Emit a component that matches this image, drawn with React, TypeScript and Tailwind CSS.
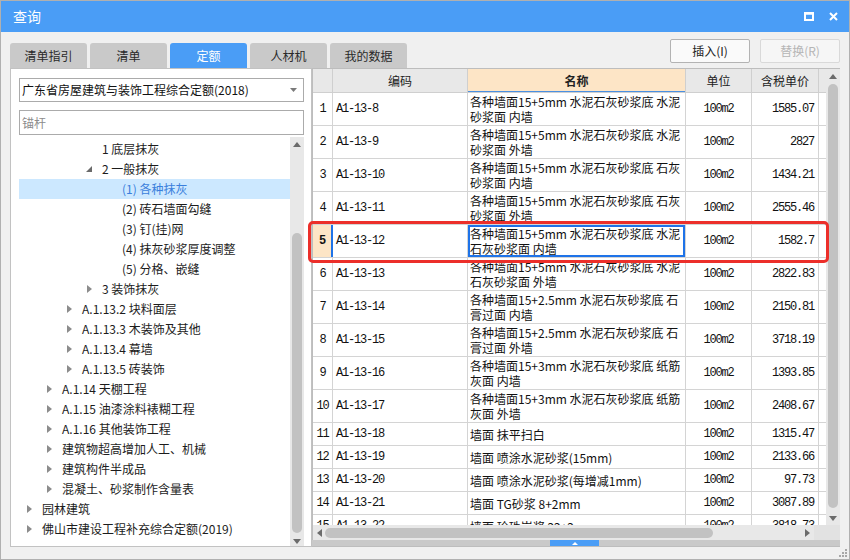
import React from 'react';

type TreeItem = { level: number; text: string; arrow: 'none' | 'open' | 'closed'; selected?: boolean };
type Row = { no: number; code: string; name: string[]; price: string };

const treeItems: TreeItem[] = [
  { level: 3, text: '1 底层抹灰', arrow: 'none' },
  { level: 3, text: '2 一般抹灰', arrow: 'open' },
  { level: 4, text: '(1) 各种抹灰', arrow: 'none', selected: true },
  { level: 4, text: '(2) 砖石墙面勾缝', arrow: 'none' },
  { level: 4, text: '(3) 钉(挂)网', arrow: 'none' },
  { level: 4, text: '(4) 抹灰砂浆厚度调整', arrow: 'none' },
  { level: 4, text: '(5) 分格、嵌缝', arrow: 'none' },
  { level: 3, text: '3 装饰抹灰', arrow: 'closed' },
  { level: 2, text: 'A.1.13.2 块料面层', arrow: 'closed' },
  { level: 2, text: 'A.1.13.3 木装饰及其他', arrow: 'closed' },
  { level: 2, text: 'A.1.13.4 幕墙', arrow: 'closed' },
  { level: 2, text: 'A.1.13.5 砖装饰', arrow: 'closed' },
  { level: 1, text: 'A.1.14 天棚工程', arrow: 'closed' },
  { level: 1, text: 'A.1.15 油漆涂料裱糊工程', arrow: 'closed' },
  { level: 1, text: 'A.1.16 其他装饰工程', arrow: 'closed' },
  { level: 1, text: '建筑物超高增加人工、机械', arrow: 'closed' },
  { level: 1, text: '建筑构件半成品', arrow: 'closed' },
  { level: 1, text: '混凝土、砂浆制作含量表', arrow: 'closed' },
  { level: 0, text: '园林建筑', arrow: 'closed' },
  { level: 0, text: '佛山市建设工程补充综合定额(2019)', arrow: 'closed' },
];

const indent = ['pl-[8px]', 'pl-[28px]', 'pl-[48px]', 'pl-[68px]', 'pl-[88px]'];

const rows: Row[] = [
  { no: 1, code: 'A1-13-8', name: ['各种墙面15+5mm 水泥石灰砂浆底 水泥', '砂浆面 内墙'], price: '1585.07' },
  { no: 2, code: 'A1-13-9', name: ['各种墙面15+5mm 水泥石灰砂浆底 水泥', '砂浆面 外墙'], price: '2827' },
  { no: 3, code: 'A1-13-10', name: ['各种墙面15+5mm 水泥石灰砂浆底 石灰', '砂浆面 内墙'], price: '1434.21' },
  { no: 4, code: 'A1-13-11', name: ['各种墙面15+5mm 水泥石灰砂浆底 石灰', '砂浆面 外墙'], price: '2555.46' },
  { no: 5, code: 'A1-13-12', name: ['各种墙面15+5mm 水泥石灰砂浆底 水泥', '石灰砂浆面 内墙'], price: '1582.7' },
  { no: 6, code: 'A1-13-13', name: ['各种墙面15+5mm 水泥石灰砂浆底 水泥', '石灰砂浆面 外墙'], price: '2822.83' },
  { no: 7, code: 'A1-13-14', name: ['各种墙面15+2.5mm 水泥石灰砂浆底 石', '膏过面 内墙'], price: '2150.81' },
  { no: 8, code: 'A1-13-15', name: ['各种墙面15+2.5mm 水泥石灰砂浆底 石', '膏过面 外墙'], price: '3718.19' },
  { no: 9, code: 'A1-13-16', name: ['各种墙面15+3mm 水泥石灰砂浆底 纸筋', '灰面 内墙'], price: '1393.85' },
  { no: 10, code: 'A1-13-17', name: ['各种墙面15+3mm 水泥石灰砂浆底 纸筋', '灰面 外墙'], price: '2408.67' },
  { no: 11, code: 'A1-13-18', name: ['墙面 抹平扫白'], price: '1315.47' },
  { no: 12, code: 'A1-13-19', name: ['墙面 喷涂水泥砂浆(15mm)'], price: '2133.66' },
  { no: 13, code: 'A1-13-20', name: ['墙面 喷涂水泥砂浆(每增减1mm)'], price: '97.73' },
  { no: 14, code: 'A1-13-21', name: ['墙面 TG砂浆 8+2mm'], price: '3087.89' },
  { no: 15, code: 'A1-13-22', name: ['墙面 珍珠岩浆 22+2mm'], price: '3818.73' },
];

const cjk = "font-['Noto_Sans_CJK_SC',sans-serif]";
const mono = "font-['Liberation_Mono','Noto_Sans_CJK_SC',monospace] text-[12px] tracking-[-1.2px]";

const Arrow = ({ kind }: { kind: TreeItem['arrow'] }) => {
  if (kind === 'closed') {
    return (
      <svg width="5" height="8" viewBox="0 0 5 8">
        <path d="M0 0 L5 4 L0 8 Z" fill="#8c8c8c" />
      </svg>
    );
  }
  if (kind === 'open') {
    return (
      <svg width="6" height="6" viewBox="0 0 6 6" className="-ml-[1px]">
        <path d="M6 0 L6 6 L0 6 Z" fill="#6a6a6a" />
      </svg>
    );
  }
  return null;
};

const TriUp = () => (
  <svg width="8" height="5" viewBox="0 0 8 5">
    <path d="M0 5 L4 0 L8 5 Z" fill="#6b6b6b" />
  </svg>
);
const TriDown = () => (
  <svg width="8" height="5" viewBox="0 0 8 5">
    <path d="M0 0 L8 0 L4 5 Z" fill="#6b6b6b" />
  </svg>
);

const TreePanel = () => (
  <div className="w-[302px] h-full bg-white border border-[#c2c2c2] flex flex-col pl-[8px] pr-[6px] pt-[9px]">
    <div className="h-[24px] w-[285px] border border-[#ababab] flex items-center justify-between pl-[2px] pr-[6px]">
      <span className="text-[12px] text-[#111]">广东省房屋建筑与装饰工程综合定额(2018)</span>
      <svg width="7" height="4" viewBox="0 0 7 4">
        <path d="M0 0 L7 0 L3.5 4 Z" fill="#7a7a7a" />
      </svg>
    </div>
    <div className="mt-[8px] h-[25px] w-[285px] border border-[#ababab] flex items-center pl-[2px]">
      <span className="text-[12px] text-[#8c8c8c]">锚杆</span>
    </div>
    <div className="mt-[2px] flex-1 min-h-0 flex w-[285px]">
      <div className="w-[271px] pt-[2px] overflow-hidden">
        {treeItems.map((t, i) => (
          <div
            key={i}
            className={`h-[20px] flex items-center whitespace-nowrap ${indent[t.level]} ${t.selected ? 'bg-[#cce8ff] text-[#3a7fdc]' : 'text-[#1c1c1c]'}`}
          >
            <span className="w-[15px] flex items-center">
              <Arrow kind={t.arrow} />
            </span>
            <span className="text-[12px] leading-[20px]">{t.text}</span>
          </div>
        ))}
      </div>
      <div className="w-[14px] bg-[#e8e8e8] flex flex-col">
        <div className="h-[14px] flex items-center justify-center">
          <TriUp />
        </div>
        <div className="flex-1 pt-[82px] flex justify-center">
          <div className="w-[10px] h-[300px] rounded-full bg-[#c2c2c2]" />
        </div>
        <div className="h-[10px] flex items-center justify-center">
          <TriDown />
        </div>
      </div>
    </div>
  </div>
);

const TableArea = () => (
  <div className="w-[528px] h-full flex flex-col border-t border-b border-[#bdbdbd]">
    <div className="h-[456px] flex">
      <div className="w-[514px] h-full overflow-hidden bg-white border-l border-[#bdbdbd]">
        <div className={`h-[24px] flex bg-[#e8e8e8] border-b border-[#cfcfcf] text-[12px] text-[#222] ${cjk}`}>
          <div className="w-[20px] border-r border-[#cfcfcf]" />
          <div className="w-[135px] border-r border-[#cfcfcf] flex items-center justify-center">编码</div>
          <div className="w-[218px] border-r border-[#cfcfcf] flex items-center justify-center bg-[#fde5c6] font-bold shadow-[inset_0_-1px_0_#4a90e2]">名称</div>
          <div className="w-[66px] border-r border-[#cfcfcf] flex items-center justify-center">单位</div>
          <div className="w-[67px] border-r border-[#cfcfcf] flex items-center justify-center">含税单价</div>
          <div className="flex-1" />
        </div>
        {rows.map((r) => {
          const sel = r.no === 5;
          const two = r.name.length > 1;
          return (
            <div key={r.no} className={`${two ? 'h-[33px]' : 'h-[23px]'} flex border-b border-[#d4d4d4] text-[#111]`}>
              <div
                className={`w-[20px] flex items-center justify-center ${mono} ${sel ? 'bg-[#fde5c6] font-bold border-r-2 border-[#1e73e8]' : 'border-r border-[#d4d4d4]'}`}
              >
                {r.no}
              </div>
              <div className={`w-[135px] border-r border-[#d4d4d4] flex items-center pl-[3px] ${mono}`}>{r.code}</div>
              <div
                className={`w-[218px] border-r border-[#d4d4d4] flex flex-col pl-[2px] overflow-hidden text-[12px] whitespace-nowrap ${cjk} ${two ? 'pt-[1px] leading-[15px]' : 'justify-center leading-[15px]'} ${sel ? 'shadow-[inset_0_0_0_2px_#1e73e8]' : ''}`}
              >
                {r.name.map((l, j) => (
                  <span key={j}>{l}</span>
                ))}
              </div>
              <div className={`w-[66px] border-r border-[#d4d4d4] flex items-center justify-center ${mono}`}>100m2</div>
              <div className={`w-[67px] border-r border-[#d4d4d4] flex items-center justify-end pr-[4px] ${mono}`}>{r.price}</div>
              <div className="flex-1" />
            </div>
          );
        })}
      </div>
      <div className="w-[14px] h-full bg-[#e8e8e8] flex flex-col">
        <div className="h-[14px] flex items-center justify-center">
          <TriUp />
        </div>
        <div className="flex-1 pt-[1px] flex justify-center">
          <div className="w-[10px] h-[424px] rounded-full bg-[#c2c2c2]" />
        </div>
        <div className="h-[14px] flex items-center justify-center">
          <TriDown />
        </div>
      </div>
    </div>
    <div className="h-[15px] flex bg-[#e8e8e8] border-l border-[#bdbdbd]">
      <div className="w-[12px] flex items-center justify-center">
        <svg width="5" height="8" viewBox="0 0 5 8">
          <path d="M5 0 L0 4 L5 8 Z" fill="#6b6b6b" />
        </svg>
      </div>
      <div className="w-[388px] h-[10px] mt-[3px] rounded-full bg-[#c2c2c2]" />
      <div className="w-[101px] flex items-center justify-end pr-[4px]">
        <svg width="5" height="8" viewBox="0 0 5 8">
          <path d="M0 0 L5 4 L0 8 Z" fill="#6b6b6b" />
        </svg>
      </div>
      <div className="flex-1 bg-[#e2e2e2]" />
    </div>
    <div className="h-[6px] bg-[#c9c9c9] flex pl-[238px]">
      <div className="w-[49px] h-full bg-[#4a9df6] flex items-center justify-center">
        <svg width="6" height="3" viewBox="0 0 6 3">
          <path d="M0 3 L3 0 L6 3 Z" fill="#ffffff" />
        </svg>
      </div>
    </div>
  </div>
);

const tabs = ['清单指引', '清单', '定额', '人材机', '我的数据'];

export default function App() {
  return (
    <div className={`relative w-[850px] h-[560px] border border-[#b0b0b0] bg-[#f0f0f0] flex flex-col overflow-hidden ${cjk}`}>
      <div className="h-[31px] bg-[#4a9df6] flex items-center justify-between pl-[12px] pr-[11px]">
        <span className="text-white text-[14px]">查询</span>
        <div className="flex items-center gap-[15px]">
          <svg width="10" height="9" viewBox="0 0 10 9">
            <rect x="1" y="1.5" width="8" height="6.5" fill="none" stroke="#fff" strokeWidth="2" />
            <rect x="0" y="0" width="10" height="2.5" fill="#fff" />
          </svg>
          <svg width="9" height="9" viewBox="0 0 9 9">
            <path d="M1 1 L8 8 M8 1 L1 8" stroke="#fff" strokeWidth="2" />
          </svg>
        </div>
      </div>
      <div className="h-[36px] flex justify-between pl-[9px] pr-[9px]">
        <div className="flex items-end gap-[3px]">
          {tabs.map((t) => (
            <div
              key={t}
              className={`w-[77px] h-[25px] rounded-t-[3px] flex items-center justify-center text-[12px] ${t === '定额' ? 'bg-[#4a9df6] text-white' : 'bg-[#c9c9c9] text-[#2a2a2a]'}`}
            >
              {t}
            </div>
          ))}
        </div>
        <div className="flex gap-[10px] pt-[7px]">
          <div className="w-[80px] h-[24px] rounded-[2px] border border-[#b3b3b3] bg-[#fafafa] flex items-center justify-center text-[12px] text-[#222]">
            插入(I)
          </div>
          <div className="w-[80px] h-[24px] rounded-[2px] border border-[#d9d9d9] bg-[#f6f6f6] flex items-center justify-center text-[12px] text-[#b5b5b5]">
            替换(R)
          </div>
        </div>
      </div>
      <div className="h-[479px] flex pl-[9px] pr-[9px]">
        <TreePanel />
        <TableArea />
      </div>
      <div className="flex-1" />
      <div className="absolute left-[307px] top-[220px] w-[521px] h-[42px] border-[3px] border-[#ec2f2a] rounded-[5px]" />
      <svg className="absolute right-[2px] bottom-[2px]" width="8" height="8" viewBox="0 0 8 8">
        <rect x="6" y="0" width="2" height="2" fill="#a8a8a8" />
        <rect x="3" y="3" width="2" height="2" fill="#a8a8a8" />
        <rect x="6" y="3" width="2" height="2" fill="#a8a8a8" />
        <rect x="0" y="6" width="2" height="2" fill="#a8a8a8" />
        <rect x="3" y="6" width="2" height="2" fill="#a8a8a8" />
        <rect x="6" y="6" width="2" height="2" fill="#a8a8a8" />
      </svg>
    </div>
  );
}
